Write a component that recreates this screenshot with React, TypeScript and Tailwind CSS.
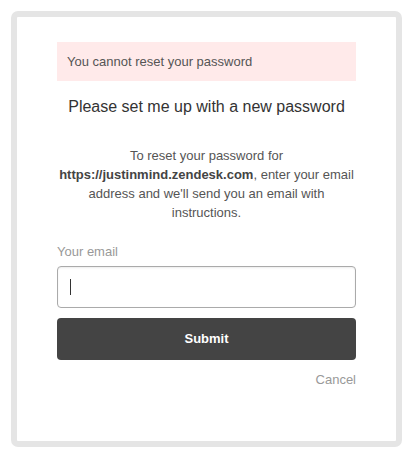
export default function App() {
  return (
    <div className="min-h-screen bg-white pt-[11px] pl-[11px]" style={{ fontFamily: '"Liberation Sans", Arial, sans-serif' }}>
      <div className="w-[391px] h-[436px] rounded-[7px] border-[6px] border-[#e5e5e5] bg-white px-[40px] pt-[25px]">
        <div className="h-[39px] bg-[#ffeaea] px-[10px] flex items-center text-[13px] text-[#555]">
          You cannot reset your password
        </div>
        <h2 className="mt-[16px] text-center text-[16px] text-[#333] leading-[20px]">
          Please set me up with a new password
        </h2>
        <p className="mt-[29px] text-center text-[13px] leading-[19px] text-[#555]">
          To reset your password for <b className="text-[#444]">https://justinmind.zendesk.com</b>, enter your email address and we'll send you an email with instructions.
        </p>
        <label className="block mt-[22px] text-[13px] text-[#999] leading-[16px]">Your email</label>
        <div className="mt-[6px] h-[42px] rounded-[4px] border border-[#aaa] shadow-[inset_0_1px_2px_rgba(0,0,0,0.08)] flex items-center pl-[12px]">
          <div className="w-px h-[16px] bg-[#333]" />
        </div>
        <button className="mt-[10px] w-full h-[42px] rounded-[4px] bg-[#444] text-white text-[13px] font-bold">
          Submit
        </button>
        <div className="mt-[12px] text-right text-[13px] text-[#999] leading-[16px]">Cancel</div>
      </div>
    </div>
  );
}
